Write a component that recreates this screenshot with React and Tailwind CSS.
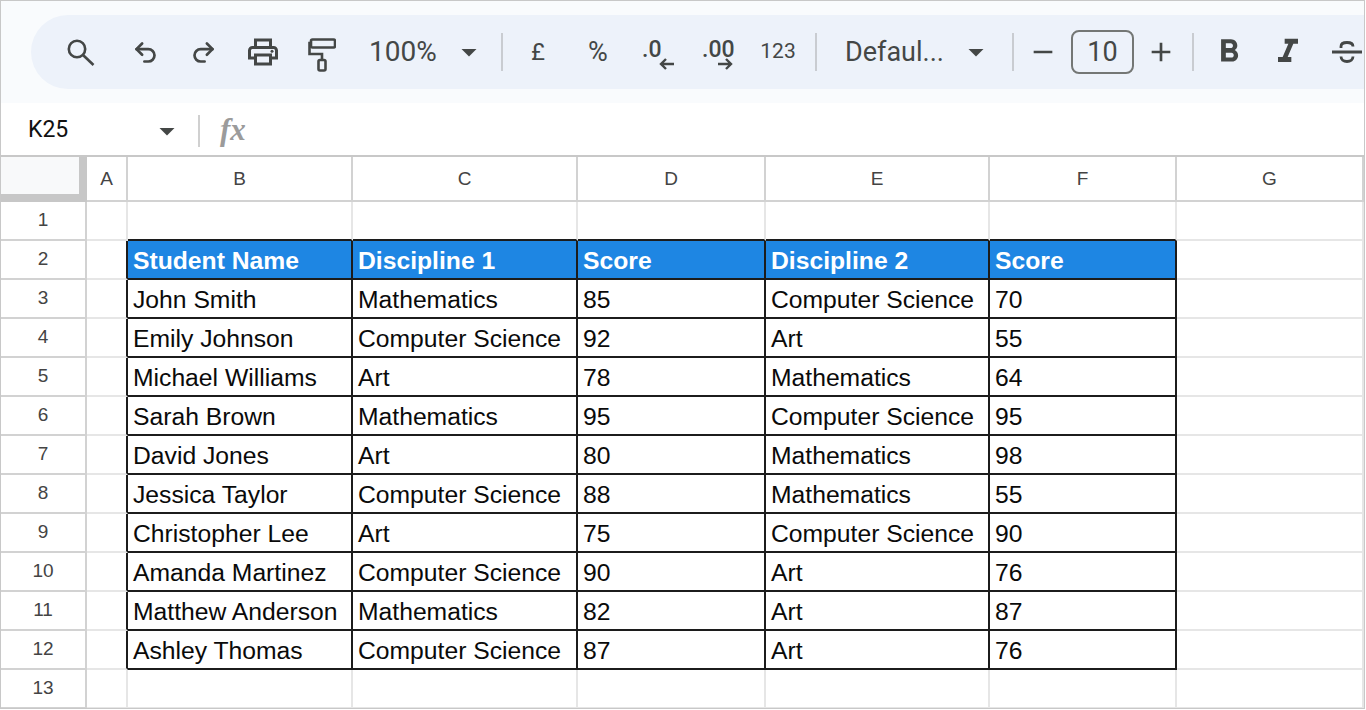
import {
  MdOutlinePrint,
  MdArrowDropDown,
  MdFormatBold,
  MdFormatItalic,
  MdRemove,
  MdAdd,
} from "react-icons/md";
import { Undo2, Redo2 } from "lucide-react";

const columns = ["A", "B", "C", "D", "E", "F", "G"];

const header = ["Student Name", "Discipline 1", "Score", "Discipline 2", "Score"];

const students = [
  ["John Smith", "Mathematics", "85", "Computer Science", "70"],
  ["Emily Johnson", "Computer Science", "92", "Art", "55"],
  ["Michael Williams", "Art", "78", "Mathematics", "64"],
  ["Sarah Brown", "Mathematics", "95", "Computer Science", "95"],
  ["David Jones", "Art", "80", "Mathematics", "98"],
  ["Jessica Taylor", "Computer Science", "88", "Mathematics", "55"],
  ["Christopher Lee", "Art", "75", "Computer Science", "90"],
  ["Amanda Martinez", "Computer Science", "90", "Art", "76"],
  ["Matthew Anderson", "Mathematics", "82", "Art", "87"],
  ["Ashley Thomas", "Computer Science", "87", "Art", "76"],
];

const rows = [1, 2, 3, 4, 5, 6, 7, 8, 9, 10, 11, 12, 13];

function Slot({ className, children }) {
  return (
    <div className={"flex h-[40px] w-[40px] flex-none items-center justify-center " + className}>
      {children}
    </div>
  );
}

function Sep({ className }) {
  return <div className={"h-[38px] w-[2px] flex-none bg-[#c9ccd1] " + className} />;
}

function SearchIcon() {
  return (
    <svg width="28" height="27" viewBox="0 0 28 27" fill="none" stroke="currentColor" strokeWidth="2.6">
      <circle cx="10" cy="10" r="8.2" />
      <path d="M16 16L26.5 26" />
    </svg>
  );
}

function RollerIcon() {
  return (
    <svg width="28" height="34" viewBox="0 0 28 34" fill="none" stroke="currentColor" strokeWidth="2.6">
      <rect x="3" y="1.5" width="24" height="8" rx="1.5" />
      <path d="M3 5H1.5V16H14V22" />
      <rect x="10.5" y="22" width="7" height="10.5" rx="1.5" />
    </svg>
  );
}

function StrikeIcon() {
  return (
    <svg width="32" height="30" viewBox="0 0 32 30" fill="none" stroke="currentColor" strokeWidth="2.8">
      <path d="M1 15H31" />
      <path d="M10 11V9.5C10 7 12.5 5.5 16 5.5S22 7 22 9.5" />
      <path d="M10 19.5C10 22.5 12.5 24.5 16 24.5S22 22.5 22 19.5" />
    </svg>
  );
}

function ArrowIcon({ left }) {
  return (
    <svg width="16" height="12" viewBox="0 0 16 12" fill="none" stroke="currentColor" strokeWidth="2.4">
      {left ? <path d="M15 6H2M7 1L2 6L7 11" /> : <path d="M1 6H14M9 1L14 6L9 11" />}
    </svg>
  );
}

function Toolbar() {
  return (
    <div className="bg-[#f9fbfd] py-[14px]">
      <div className="ml-[30px] flex h-[74px] items-center overflow-hidden rounded-l-[37px] bg-[#edf2fa] pl-[30px] text-[#444746]">
        <Slot className=""><SearchIcon /></Slot>
        <Slot className="ml-[24px]"><Undo2 size={27} strokeWidth={2.4} /></Slot>
        <Slot className="ml-[18px]"><Redo2 size={27} strokeWidth={2.4} /></Slot>
        <Slot className="ml-[20px]"><MdOutlinePrint size={36} /></Slot>
        <Slot className="ml-[19px] pt-[6px]"><RollerIcon /></Slot>
        <div className="ml-[27px] w-[68px] flex-none text-[28px]">100%</div>
        <Slot className="ml-[12px]"><MdArrowDropDown size={36} /></Slot>
        <Sep className="ml-[12px]" />
        <Slot className="ml-[15px] text-[24px]">£</Slot>
        <Slot className="ml-[20px] text-[27px]">%</Slot>
        <Slot className="relative ml-[14px]">
          <span className="absolute top-[1px] left-[10px] text-[23px] font-medium">.0</span>
          <span className="absolute top-[26px] left-[27px]"><ArrowIcon left /></span>
        </Slot>
        <Slot className="relative ml-[25px]">
          <span className="absolute top-[1px] left-[5px] text-[23px] font-medium">.00</span>
          <span className="absolute top-[26px] left-[20px]"><ArrowIcon /></span>
        </Slot>
        <Slot className="ml-[21px] text-[21px]">123</Slot>
        <Sep className="ml-[17px]" />
        <div className="ml-[28px] w-[100px] flex-none text-[27px]">Defaul...</div>
        <Slot className="ml-[11px]"><MdArrowDropDown size={36} /></Slot>
        <Sep className="ml-[16px]" />
        <Slot className="ml-[9px]"><MdRemove size={32} /></Slot>
        <div className="ml-[8px] flex h-[44px] w-[63px] flex-none items-center justify-center rounded-[8px] border-2 border-[#747775] text-[27px]">
          10
        </div>
        <Slot className="ml-[7px]"><MdAdd size={32} /></Slot>
        <Sep className="ml-[11px]" />
        <Slot className="ml-[15px]"><MdFormatBold size={38} /></Slot>
        <Slot className="ml-[19px]"><MdFormatItalic size={40} /></Slot>
        <Slot className="ml-[19px]"><StrikeIcon /></Slot>
      </div>
    </div>
  );
}

function FormulaBar() {
  return (
    <div className="flex h-[52px] items-center bg-white pt-[3px] text-[#111]">
      <div className="ml-[27px] w-[121px] flex-none text-[23px]">K25</div>
      <MdArrowDropDown size={36} className="flex-none text-[#444746]" />
      <div className="ml-[13px] h-[32px] w-[2px] flex-none bg-[#d0d0d0]" />
      <div className="ml-[20px] font-['Liberation_Serif',serif] text-[31px] font-bold text-[#9b9b9b] italic">
        fx
      </div>
    </div>
  );
}

// dark = inside the table, edge = the cell just above or left of it
function Cell({ right, bottom, className, children }) {
  return (
    <div
      className={
        "flex items-center border-r-2 border-b-2 pt-[3px] pl-[5px] text-[24.7px] whitespace-nowrap text-[#0a0a0a] " +
        (right ? "border-r-[#1c1c1c] " : "border-r-[#e6e6e6] ") +
        (bottom ? "border-b-[#1c1c1c] " : "border-b-[#e6e6e6] ") +
        (className || "")
      }
    >
      {children}
    </div>
  );
}

function Grid() {
  return (
    <div className="grid grid-cols-[86px_41px_225px_225px_188px_224px_187px_187px] grid-rows-[45px_repeat(13,39px)] border-t-2 border-[#c8c8c8] font-['Liberation_Sans',sans-serif]">
      <div className="border-r-[8px] border-b-[8px] border-[#c7c7c7] bg-[#f8f9fa]" />
      {columns.map((c) => (
        <div
          key={c}
          className="flex items-center justify-center border-r-2 border-b-2 border-[#d2d2d2] pt-[2px] text-[19px] text-[#444]"
        >
          {c}
        </div>
      ))}
      {rows.map((r) => {
        const inTable = r >= 2 && r <= 12;
        const values = r === 2 ? header : students[r - 3];
        return [
          <div
            key={"h" + r}
            className="flex items-center justify-center border-r-2 border-b-2 border-[#d2d2d2] text-[19px] text-[#444]"
          >
            {r}
          </div>,
          <Cell key={"a" + r} right={inTable} />,
          ...[0, 1, 2, 3, 4].map((i) => (
            <Cell
              key={r + "-" + i}
              right={inTable}
              bottom={inTable || r === 1}
              className={r === 2 ? "bg-[#1e86e3] font-bold text-white" : ""}
            >
              {values ? values[i] : ""}
            </Cell>
          )),
          <Cell key={"g" + r} />,
        ];
      })}
    </div>
  );
}

export default function App() {
  return (
    <div className="h-[710px] w-[1366px] overflow-hidden bg-white font-['Roboto',sans-serif]">
      <div className="h-[709px] w-[1365px] overflow-hidden border border-[#c8c8c8]">
        <Toolbar />
        <FormulaBar />
        <Grid />
      </div>
    </div>
  );
}
